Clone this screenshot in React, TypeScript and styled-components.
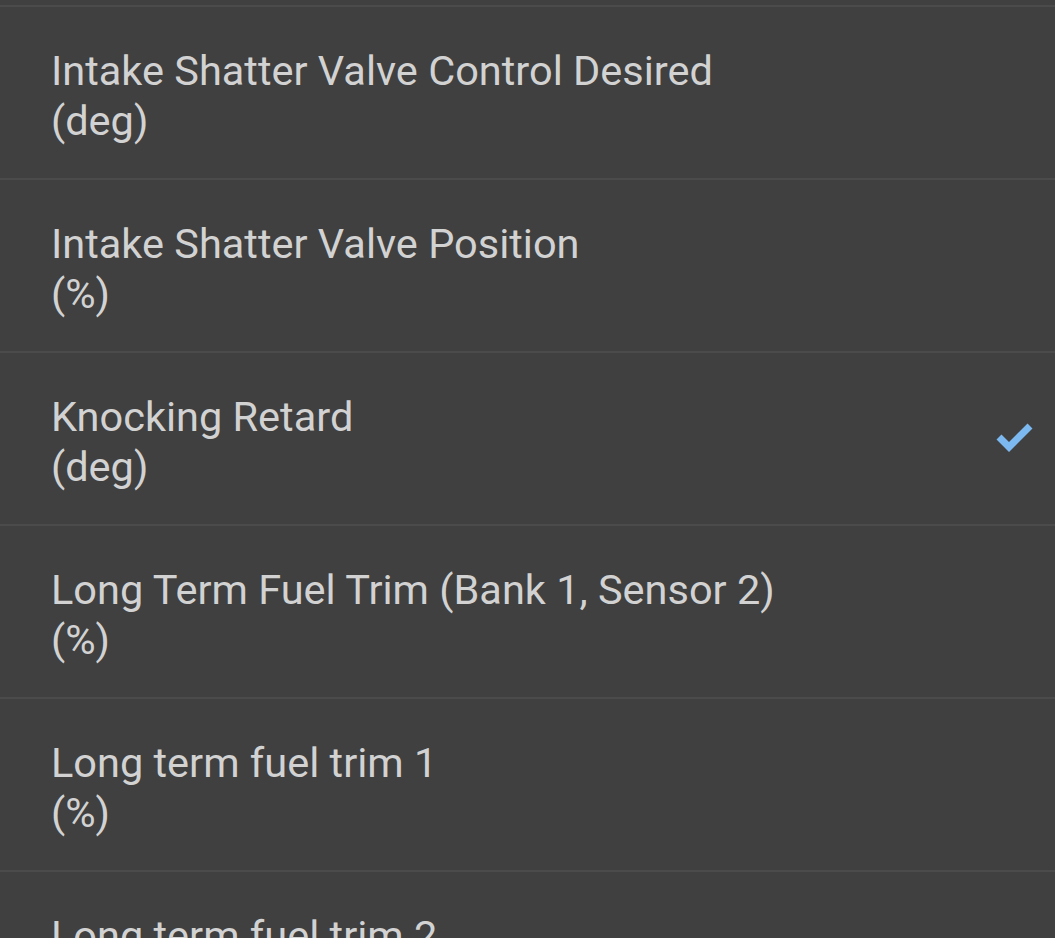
import React from "react";
import styled, { createGlobalStyle } from "styled-components";

const Global = createGlobalStyle`
  html, body {
    margin: 0;
    padding: 0;
    background: #404040;
  }
  body {
    font-family: Roboto, "Noto Sans", sans-serif;
  }
`;

const List = styled.div`
  display: flex;
  flex-direction: column;
  width: 1055px;
  height: 938px;
  overflow: hidden;
  background: #404040;
  padding-top: 5px;
  box-sizing: border-box;
`;

const Row = styled.div`
  display: flex;
  align-items: center;
  justify-content: space-between;
  flex-shrink: 0;
  height: 171px;
  border-top: 2px solid #4b4b4b;
  padding: 0 18px 0 51px;
  box-sizing: content-box;
`;

const Label = styled.div`
  display: flex;
  flex-direction: column;
  padding-top: 6px;
  font-size: 41.5px;
  line-height: 50px;
  color: #d2d2d2;
`;

const Check = styled.svg`
  width: 44px;
  height: 36px;
  flex-shrink: 0;
  margin-top: -4px;
`;

type Item = { name: string; unit: string; checked?: boolean };

const items: Item[] = [
  { name: "Intake Shatter Valve Control Desired", unit: "(deg)" },
  { name: "Intake Shatter Valve Position", unit: "(%)" },
  { name: "Knocking Retard", unit: "(deg)", checked: true },
  { name: "Long Term Fuel Trim (Bank 1, Sensor 2)", unit: "(%)" },
  { name: "Long term fuel trim 1", unit: "(%)" },
  { name: "Long term fuel trim 2", unit: "(%)" },
];

export default function App() {
  return (
    <>
      <Global />
      <List>
        {items.map((it) => (
          <Row key={it.name}>
            <Label>
              <span>{it.name}</span>
              <span>{it.unit}</span>
            </Label>
            {it.checked && (
              <Check viewBox="0 0 44 36">
                <polyline
                  points="6,18 16,28 37,7"
                  fill="none"
                  stroke="#7cb9f0"
                  strokeWidth="7"
                  strokeLinejoin="miter"
                />
              </Check>
            )}
          </Row>
        ))}
      </List>
    </>
  );
}
